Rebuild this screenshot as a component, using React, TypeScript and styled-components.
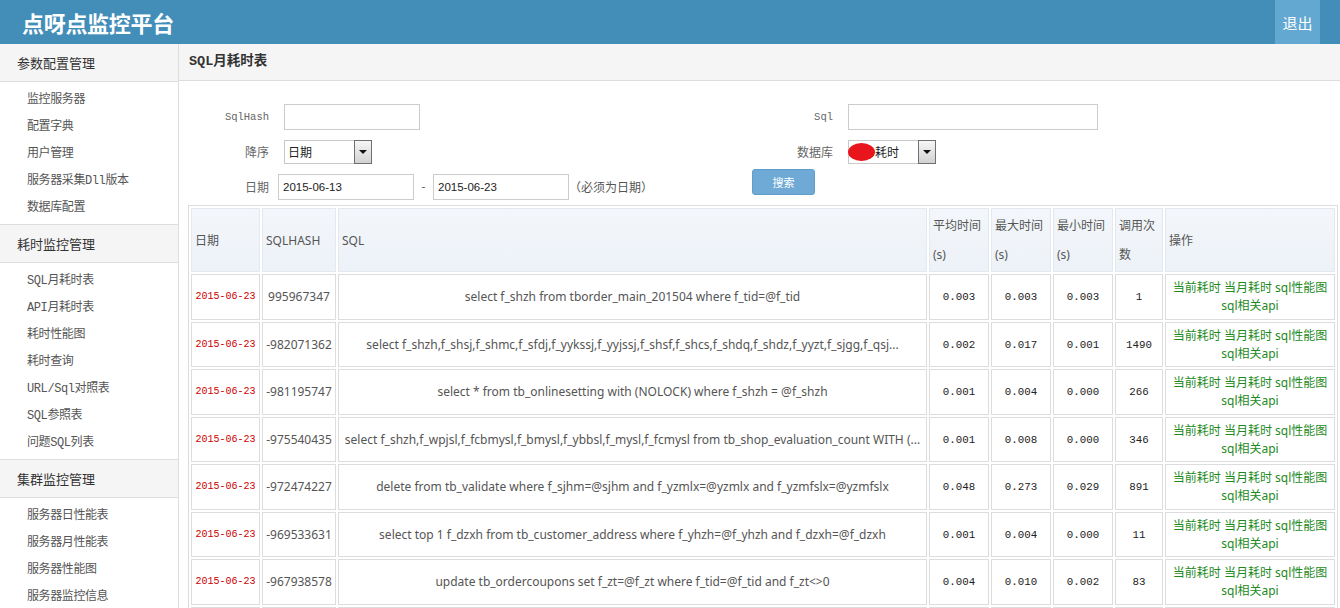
import styled, { createGlobalStyle } from 'styled-components';

const GlobalStyle = createGlobalStyle`
  html, body {
    margin: 0;
    padding: 0;
    height: 100%;
    overflow: hidden;
    background: #fff;
  }
  body {
    font-family: "Noto Sans", "Noto Sans CJK SC", sans-serif;
    font-size: 12px;
    color: #333;
  }
  #root {
    height: 100%;
  }
`;

const NAV = [
  {
    title: '参数配置管理',
    items: ['监控服务器', '配置字典', '用户管理', '服务器采集Dll版本', '数据库配置'],
  },
  {
    title: '耗时监控管理',
    items: ['SQL月耗时表', 'API月耗时表', '耗时性能图', '耗时查询', 'URL/Sql对照表', 'SQL参照表', '问题SQL列表'],
  },
  {
    title: '集群监控管理',
    items: ['服务器日性能表', '服务器月性能表', '服务器性能图', '服务器监控信息'],
  },
];

const ROWS = [
  ['995967347', 'select f_shzh from tborder_main_201504 where f_tid=@f_tid', '0.003', '0.003', '0.003', '1'],
  ['-982071362', 'select f_shzh,f_shsj,f_shmc,f_sfdj,f_yykssj,f_yyjssj,f_shsf,f_shcs,f_shdq,f_shdz,f_yyzt,f_sjgg,f_qsj...', '0.002', '0.017', '0.001', '1490'],
  ['-981195747', 'select * from tb_onlinesetting with (NOLOCK) where f_shzh = @f_shzh', '0.001', '0.004', '0.000', '266'],
  ['-975540435', 'select f_shzh,f_wpjsl,f_fcbmysl,f_bmysl,f_ybbsl,f_mysl,f_fcmysl from tb_shop_evaluation_count WITH (...', '0.001', '0.008', '0.000', '346'],
  ['-972474227', 'delete from tb_validate where f_sjhm=@sjhm and f_yzmlx=@yzmlx and f_yzmfslx=@yzmfslx', '0.048', '0.273', '0.029', '891'],
  ['-969533631', 'select top 1 f_dzxh from tb_customer_address where f_yhzh=@f_yhzh and f_dzxh=@f_dzxh', '0.001', '0.004', '0.000', '11'],
  ['-967938578', 'update tb_ordercoupons set f_zt=@f_zt where f_tid=@f_tid and f_zt<>0', '0.004', '0.010', '0.002', '83'],
];

const App = () => {
  return (
    <Page>
      <GlobalStyle />
      <TopBar>
        <Brand>点呀点监控平台</Brand>
        <Logout href="#">退出</Logout>
      </TopBar>
      <Main>
        <Sidebar>
          {NAV.map((group, i) => (
            <div key={group.title}>
              <GroupTitle $first={i === 0}>{group.title}</GroupTitle>
              <NavList>
                {group.items.map((item) => (
                  <NavItem key={item}>{item}</NavItem>
                ))}
              </NavList>
            </div>
          ))}
        </Sidebar>
        <Content>
          <Crumb>SQL月耗时表</Crumb>
          <Body>
            <SearchForm>
              <Label $latin>SqlHash</Label>
              <Field>
                <TextInput $w={136} />
              </Field>
              <Label $latin>Sql</Label>
              <Field>
                <TextInput $w={250} />
              </Field>

              <Label>降序</Label>
              <Field>
                <SelectBox>
                  <SelectValue>日期</SelectValue>
                  <SelectArrow />
                </SelectBox>
              </Field>
              <Label>数据库</Label>
              <Field>
                <SelectBox>
                  <SelectValue>
                    <Redact />
                    耗时
                  </SelectValue>
                  <SelectArrow />
                </SelectBox>
              </Field>

              <Label>日期</Label>
              <Field $shift>
                <TextInput $w={136} defaultValue="2015-06-13" />
                <Dash>-</Dash>
                <TextInput $w={136} defaultValue="2015-06-23" />
                <Hint>（必须为日期）</Hint>
              </Field>
              <SearchButton>搜索</SearchButton>
              <div />
            </SearchForm>

            <Table>
              <thead>
                <tr>
                  <Th $w={69}>日期</Th>
                  <Th $w={74}>SQLHASH</Th>
                  <Th>SQL</Th>
                  <Th $w={60}>平均时间(s)</Th>
                  <Th $w={60}>最大时间(s)</Th>
                  <Th $w={60}>最小时间(s)</Th>
                  <Th $w={48}>调用次数</Th>
                  <Th $w={170}>操作</Th>
                </tr>
              </thead>
              <tbody>
                {ROWS.map((row) => (
                  <tr key={row[0]}>
                    <Td $kind="date">2015-06-23</Td>
                    <Td>{row[0]}</Td>
                    <Td>{row[1]}</Td>
                    <Td $kind="num">{row[2]}</Td>
                    <Td $kind="num">{row[3]}</Td>
                    <Td $kind="num">{row[4]}</Td>
                    <Td $kind="num">{row[5]}</Td>
                    <Td $kind="ops">
                      <OpLink href="#">当前耗时</OpLink> <OpLink href="#">当月耗时</OpLink>{' '}
                      <OpLink href="#">sql性能图</OpLink> <OpLink href="#">sql相关api</OpLink>
                    </Td>
                  </tr>
                ))}
                <tr>
                  <Td $kind="date" />
                  <Td />
                  <Td />
                  <Td $kind="num" />
                  <Td $kind="num" />
                  <Td $kind="num" />
                  <Td $kind="num" />
                  <Td $kind="ops" />
                </tr>
              </tbody>
            </Table>
          </Body>
        </Content>
      </Main>
    </Page>
  );
};

export default App;

const Page = styled.div`
  height: 100%;
  display: flex;
  flex-direction: column;
`;

const TopBar = styled.header`
  height: 44px;
  flex-shrink: 0;
  background: #438eb9;
  display: flex;
  align-items: center;
  justify-content: space-between;
`;

const Brand = styled.h1`
  margin: 0;
  padding-left: 22px;
  font-family: "Noto Sans CJK SC", sans-serif;
  font-size: 22px;
  font-weight: bold;
  color: #fff;
  letter-spacing: -0.3px;
`;

const Logout = styled.a`
  align-self: stretch;
  width: 45px;
  margin-right: 20px;
  background: #62a8d1;
  color: #fff;
  font-family: "Noto Sans CJK SC", sans-serif;
  font-size: 15px;
  text-decoration: none;
  display: flex;
  align-items: center;
  justify-content: center;
`;

const Main = styled.div`
  flex: 1;
  min-height: 0;
  display: flex;
`;

const Sidebar = styled.aside`
  width: 179px;
  flex-shrink: 0;
  box-sizing: border-box;
  border-right: 1px solid #ddd;
`;

const GroupTitle = styled.div<{ $first?: boolean }>`
  height: 37px;
  line-height: 37px;
  padding-left: 17px;
  background: #f5f5f5;
  border-top: ${(p) => (p.$first ? 'none' : '1px solid #ddd')};
  border-bottom: 1px solid #ddd;
  font-family: "Noto Sans CJK SC", sans-serif;
  font-size: 13px;
  color: #333;
`;

const NavList = styled.ul`
  margin: 0;
  padding: 5px 0 2px;
  list-style: none;
`;

const NavItem = styled.li`
  height: 27px;
  line-height: 27px;
  padding-left: 27px;
  font-family: "Liberation Mono", "Noto Sans CJK SC", monospace;
  font-size: 12px;
  letter-spacing: -0.4px;
  color: #555;
  cursor: pointer;
`;

const Content = styled.section`
  flex: 1;
  min-width: 0;
`;

const Crumb = styled.div`
  height: 36px;
  line-height: 36px;
  padding-left: 10px;
  background: #f5f5f5;
  border-bottom: 1px solid #ddd;
  font-family: "Liberation Mono", "Noto Sans CJK SC", monospace;
  font-size: 13.5px;
  font-weight: bold;
  color: #333;
`;

const Body = styled.div`
  padding: 18px 2px 0 9px;
`;

const SearchForm = styled.div`
  display: grid;
  grid-template-columns: 81px 483px 81px 1fr;
  grid-auto-rows: 35px;
  align-items: center;
  margin-bottom: 1px;
`;

const Label = styled.label<{ $latin?: boolean }>`
  text-align: right;
  color: #666;
  font-family: ${(p) => (p.$latin ? '"Liberation Mono", monospace' : '"Noto Sans CJK SC", sans-serif')};
  font-size: ${(p) => (p.$latin ? '10.5px' : '12px')};
`;

const Field = styled.div<{ $shift?: boolean }>`
  display: flex;
  align-items: center;
  padding-left: ${(p) => (p.$shift ? '9px' : '15px')};
`;

const TextInput = styled.input<{ $w: number }>`
  width: ${(p) => p.$w}px;
  height: 26px;
  box-sizing: border-box;
  border: 1px solid #ccc;
  padding: 0 4px;
  font-family: "Liberation Sans", sans-serif;
  font-size: 11.5px;
  color: #222;
  outline: none;
`;

const SelectBox = styled.div`
  width: 88px;
  height: 24px;
  box-sizing: border-box;
  border: 1px solid #c8c8c8;
  display: flex;
  background: #fff;
`;

const SelectValue = styled.div`
  flex: 1;
  padding-left: 3px;
  display: flex;
  align-items: center;
  font-family: "Noto Sans CJK SC", sans-serif;
  font-size: 12px;
  color: #222;
`;

const Redact = styled.span`
  width: 27px;
  height: 18px;
  margin-left: -4px;
  border-radius: 50%;
  background: #e8151d;
`;

const SelectArrow = styled.span`
  width: 16px;
  margin: -1px -1px -1px 0;
  border: 1px solid #707070;
  background: linear-gradient(#f6f6f6, #d2d2d2);
  display: flex;
  align-items: center;
  justify-content: center;

  &::after {
    content: '';
    border-left: 4px solid transparent;
    border-right: 4px solid transparent;
    border-top: 4px solid #111;
  }
`;

const Dash = styled.span`
  width: 19px;
  text-align: center;
  color: #666;
`;

const Hint = styled.span`
  font-family: "Noto Sans CJK SC", sans-serif;
  font-size: 12px;
  color: #555;
`;

const SearchButton = styled.button`
  justify-self: start;
  align-self: start;
  width: 63px;
  height: 26px;
  padding: 0;
  border: 1px solid #5f9dcb;
  border-radius: 3px;
  background: #6eaad5;
  color: #fff;
  font-family: "Noto Sans CJK SC", sans-serif;
  font-size: 11px;
  cursor: pointer;
`;

const Table = styled.table`
  width: 100%;
  table-layout: fixed;
  border: 1px solid #ddd;
  border-spacing: 2px;
`;

const Th = styled.th<{ $w?: number }>`
  width: ${(p) => (p.$w ? `${p.$w}px` : 'auto')};
  box-sizing: border-box;
  padding: 2px 3px;
  border: 1px solid #e4e9ef;
  background: linear-gradient(#f3f6fa, #edf2f8);
  line-height: 29px;
  text-align: left;
  vertical-align: middle;
  font-weight: normal;
  font-size: 12px;
  color: #555;
`;

const Td = styled.td<{ $kind?: 'date' | 'num' | 'ops' }>`
  box-sizing: border-box;
  height: 45.5px;
  padding: ${(p) => (p.$kind === 'date' ? '4px 0 3.5px' : '4px 3px 3.5px')};
  border: 1px solid #ddd;
  line-height: 18px;
  text-align: center;
  vertical-align: middle;
  color: ${(p) => (p.$kind === 'date' ? '#c00' : p.$kind === 'num' ? '#222' : '#555')};
  font-family: ${(p) =>
    p.$kind === 'date' || p.$kind === 'num'
      ? '"Liberation Mono", monospace'
      : '"Noto Sans", "Noto Sans CJK SC", sans-serif'};
  font-size: ${(p) => (p.$kind === 'date' ? '10px' : p.$kind === 'num' ? '10.8px' : '12px')};
  white-space: ${(p) => (p.$kind === 'ops' ? 'normal' : 'nowrap')};
  overflow: hidden;
  text-overflow: ${(p) => (p.$kind === 'date' ? 'clip' : 'ellipsis')};
`;

const OpLink = styled.a`
  color: #1d8a1d;
  text-decoration: none;
  font-family: "Noto Sans", "Noto Sans CJK SC", sans-serif;
  font-size: 12px;
`;
